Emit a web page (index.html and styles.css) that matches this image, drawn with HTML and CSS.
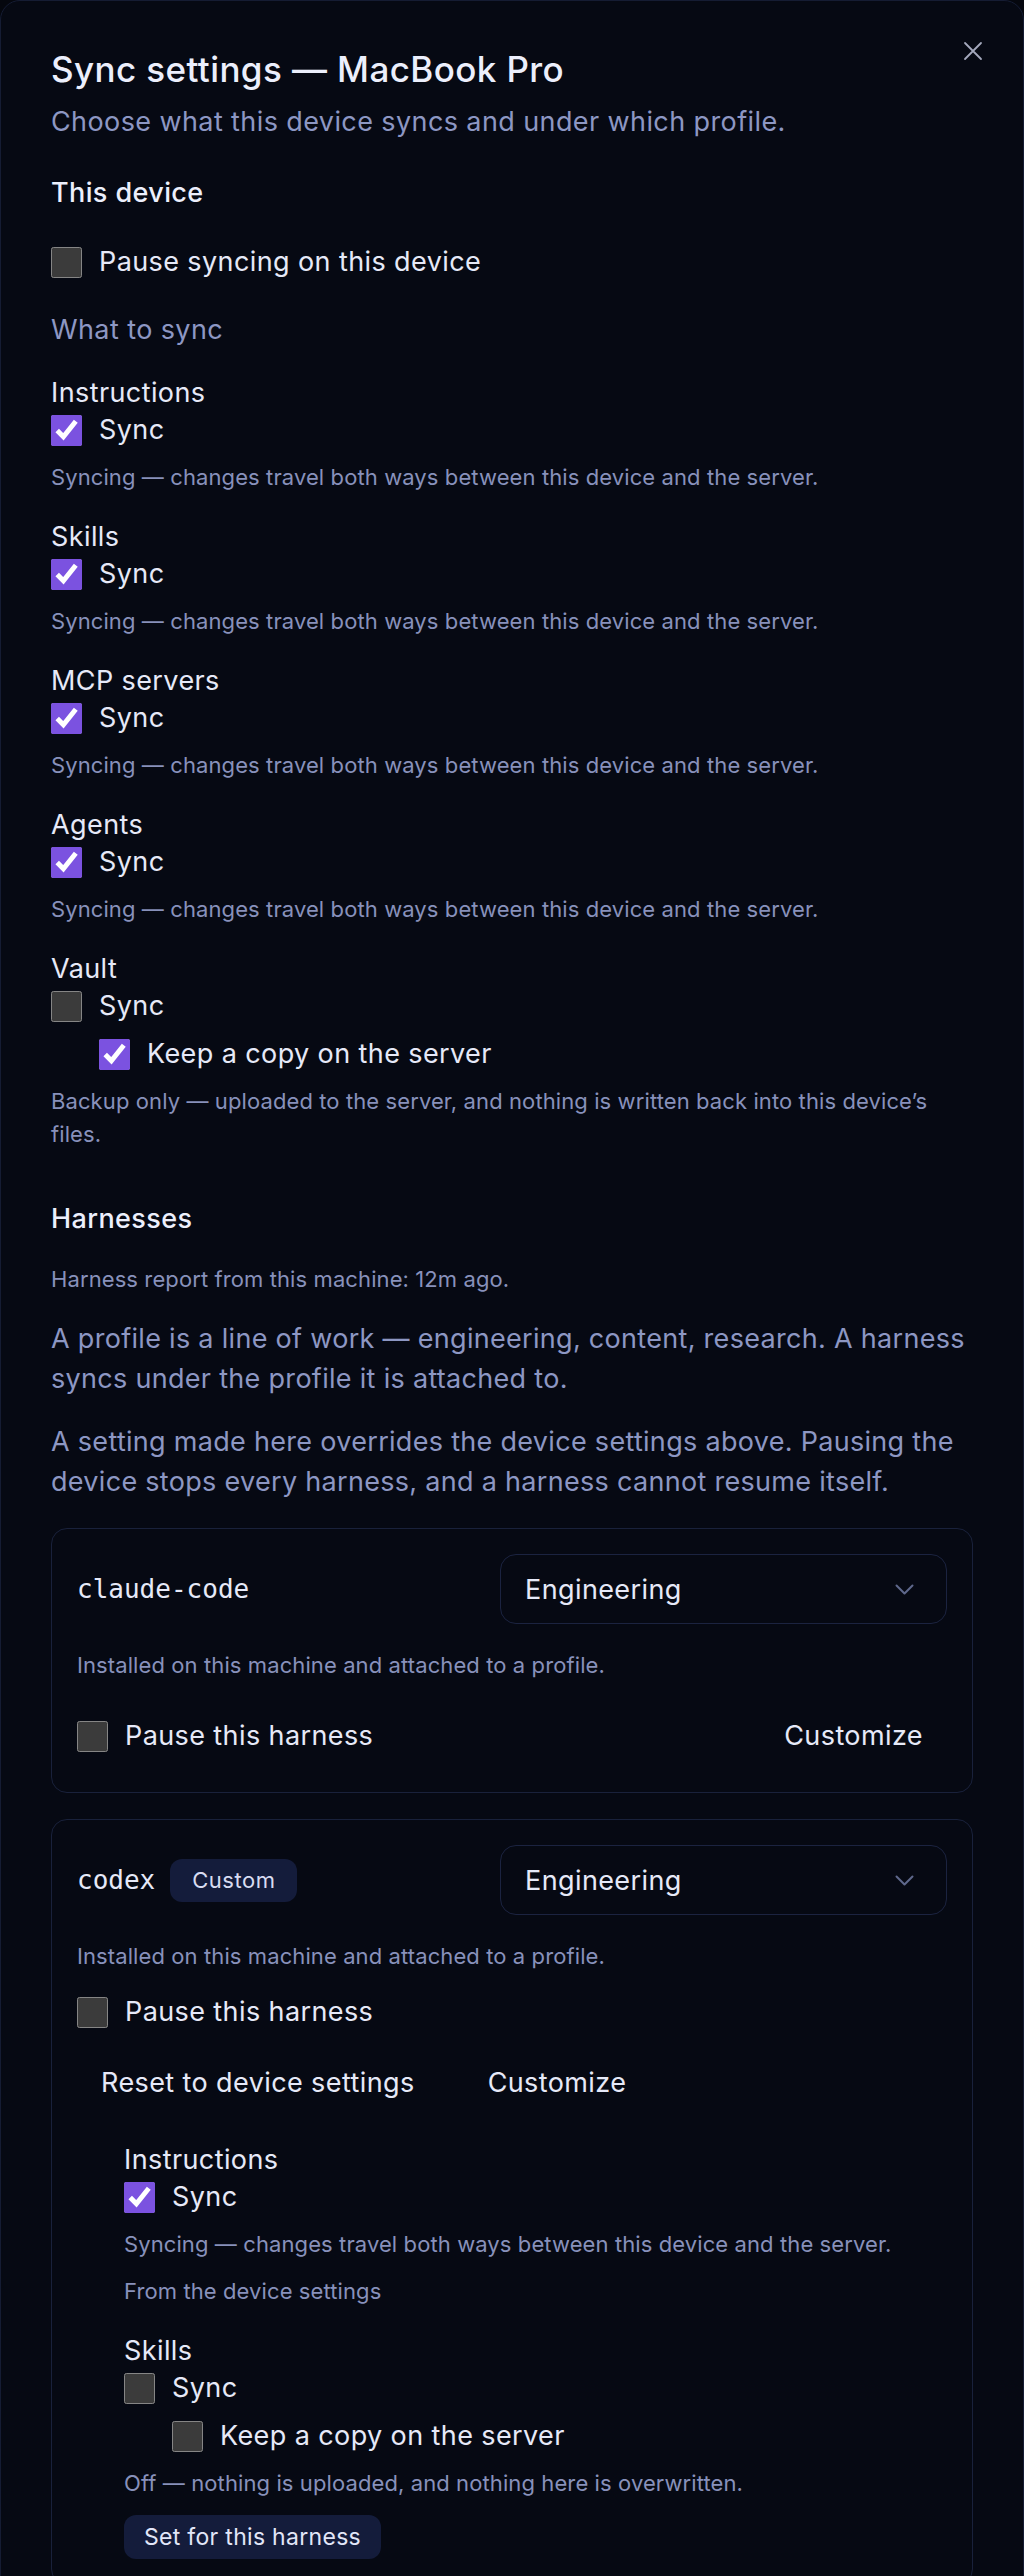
FILE: index.html
```html
<!DOCTYPE html>
<html lang="en">
<head>
    <meta charset="UTF-8">
    <meta name="viewport" content="width=device-width, initial-scale=1.0">
    <title>Sync settings — MacBook Pro</title>
    <link rel="stylesheet" href="styles.css">
</head>
<body>
    <div class="dialog">
        <button class="close" aria-label="Close">
            <svg width="20" height="20" viewBox="0 0 20 20"><path d="M2 2L18 18M18 2L2 18" stroke="currentColor" stroke-width="1.8" fill="none" stroke-linecap="round"/></svg>
        </button>
        <h1 class="title">Sync settings — MacBook Pro</h1>
        <p class="subtitle">Choose what this device syncs and under which profile.</p>

        <h2 class="section-title">This device</h2>
        <label class="check pause-device"><input type="checkbox"><span>Pause syncing on this device</span></label>

        <p class="group-label">What to sync</p>
        <div class="sync-list">
            <div class="sync-item">
                <div class="item-label">Instructions</div>
                <label class="check"><input type="checkbox" checked><span>Sync</span></label>
                <p class="helper">Syncing — changes travel both ways between this device and the server.</p>
            </div>
            <div class="sync-item">
                <div class="item-label">Skills</div>
                <label class="check"><input type="checkbox" checked><span>Sync</span></label>
                <p class="helper">Syncing — changes travel both ways between this device and the server.</p>
            </div>
            <div class="sync-item">
                <div class="item-label">MCP servers</div>
                <label class="check"><input type="checkbox" checked><span>Sync</span></label>
                <p class="helper">Syncing — changes travel both ways between this device and the server.</p>
            </div>
            <div class="sync-item">
                <div class="item-label">Agents</div>
                <label class="check"><input type="checkbox" checked><span>Sync</span></label>
                <p class="helper">Syncing — changes travel both ways between this device and the server.</p>
            </div>
            <div class="sync-item">
                <div class="item-label">Vault</div>
                <label class="check"><input type="checkbox"><span>Sync</span></label>
                <label class="check nested"><input type="checkbox" checked><span>Keep a copy on the server</span></label>
                <p class="helper">Backup only — uploaded to the server, and nothing is written back into this device’s files.</p>
            </div>
        </div>

        <h2 class="section-title harnesses-title">Harnesses</h2>
        <p class="helper report">Harness report from this machine: 12m ago.</p>
        <p class="intro">A profile is a line of work — engineering, content, research. A harness syncs under the profile it is attached to.</p>
        <p class="intro">A setting made here overrides the device settings above. Pausing the device stops every harness, and a harness cannot resume itself.</p>

        <div class="harness-card">
            <div class="harness-head">
                <div class="harness-name"><code>claude-code</code></div>
                <div class="select"><span>Engineering</span>
                    <svg width="19" height="11" viewBox="0 0 19 11"><path d="M1.5 1.5L9.5 9.5L17.5 1.5" stroke="currentColor" stroke-width="2" fill="none" stroke-linecap="round" stroke-linejoin="round"/></svg>
                </div>
            </div>
            <p class="helper installed">Installed on this machine and attached to a profile.</p>
            <div class="harness-foot">
                <label class="check"><input type="checkbox"><span>Pause this harness</span></label>
                <button class="btn-ghost">Customize</button>
            </div>
        </div>

        <div class="harness-card">
            <div class="harness-head">
                <div class="harness-name"><code>codex</code><span class="badge">Custom</span></div>
                <div class="select"><span>Engineering</span>
                    <svg width="19" height="11" viewBox="0 0 19 11"><path d="M1.5 1.5L9.5 9.5L17.5 1.5" stroke="currentColor" stroke-width="2" fill="none" stroke-linecap="round" stroke-linejoin="round"/></svg>
                </div>
            </div>
            <p class="helper installed">Installed on this machine and attached to a profile.</p>
            <label class="check pause-harness"><input type="checkbox"><span>Pause this harness</span></label>
            <div class="actions">
                <button class="btn-ghost">Reset to device settings</button>
                <button class="btn-ghost">Customize</button>
            </div>
            <div class="override">
                <div class="sync-item">
                    <div class="item-label">Instructions</div>
                    <label class="check"><input type="checkbox" checked><span>Sync</span></label>
                    <p class="helper">Syncing — changes travel both ways between this device and the server.</p>
                    <p class="helper source">From the device settings</p>
                </div>
                <div class="sync-item">
                    <div class="item-label">Skills</div>
                    <label class="check"><input type="checkbox"><span>Sync</span></label>
                    <label class="check nested"><input type="checkbox"><span>Keep a copy on the server</span></label>
                    <p class="helper">Off — nothing is uploaded, and nothing here is overwritten.</p>
                    <button class="btn-soft">Set for this harness</button>
                </div>
            </div>
        </div>
    </div>
</body>
</html>
```
FILE: styles.css
```css
:root {
    color-scheme: dark;
}
body {
    margin: 0;
    background-color: #05070e;
    font-family: Inter, "Noto Sans", sans-serif;
    color: #e6e9f8;
}
.dialog {
    position: relative;
    padding: 46px 50px 40px;
    background-color: #060913;
    border: 1px solid #151c33;
    border-radius: 20px;
    letter-spacing: 0.4px;
}
.close {
    position: absolute;
    top: 30px;
    right: 30px;
    width: 40px;
    height: 40px;
    display: flex;
    align-items: center;
    justify-content: center;
    padding: 0;
    background: none;
    border: none;
    color: #a4a9bd;
    cursor: pointer;
}
.title {
    margin: 0;
    font-size: 35px;
    line-height: 45px;
    font-weight: 500;
    color: #eceffc;
}
.subtitle {
    margin: 10px 0 0;
    font-size: 27px;
    line-height: 40px;
    color: #8d97c3;
}
.section-title {
    margin: 31px 0 0;
    font-size: 27px;
    line-height: 40px;
    font-weight: 500;
    color: #eceffc;
}
.check {
    display: flex;
    align-items: center;
    gap: 17px;
    height: 36px;
    font-size: 27px;
    line-height: 36px;
    color: #e6e9f8;
    cursor: pointer;
}
.check input {
    width: 31px;
    height: 31px;
    margin: 0;
    flex: none;
    accent-color: #7b52e0;
}
.pause-device {
    margin-top: 29px;
    height: 40px;
}
.group-label {
    margin: 28px 0 0;
    font-size: 27px;
    line-height: 40px;
    color: #8d97c3;
}
.sync-list {
    margin-top: 25px;
    display: flex;
    flex-direction: column;
    gap: 25px;
}
.sync-item {
    display: flex;
    flex-direction: column;
}
.item-label {
    font-size: 27px;
    line-height: 36px;
    color: #e6e9f8;
}
.sync-item > .check {
    margin-top: 1px;
}
.sync-item > .check.nested {
    margin-top: 12px;
    margin-left: 48px;
}
.helper {
    margin: 13px 0 0;
    font-size: 22px;
    line-height: 33px;
    letter-spacing: 0.1px;
    color: #8891bb;
}
.harnesses-title {
    margin-top: 48px;
}
.helper.report {
    margin-top: 24px;
}
.intro {
    margin: 23px 0 0;
    font-size: 27px;
    line-height: 40px;
    letter-spacing: 0.3px;
    color: #8d97c3;
}
.harness-card {
    margin-top: 26px;
    padding: 25px;
    border: 1px solid #19213b;
    border-radius: 16px;
    display: flex;
    flex-direction: column;
}
.harness-head {
    display: flex;
    align-items: center;
    justify-content: space-between;
}
.harness-name {
    display: flex;
    align-items: center;
    gap: 15px;
}
.harness-name code {
    font-family: "DejaVu Sans Mono", monospace;
    font-size: 26px;
    line-height: 36px;
    letter-spacing: 0;
    color: #e6e9f8;
}
.badge {
    padding: 7px 22px;
    font-size: 22px;
    line-height: 29px;
    letter-spacing: 0.5px;
    background-color: #141c3b;
    color: #d8dcf2;
    border-radius: 12px;
}
.select {
    width: 447px;
    height: 70px;
    box-sizing: border-box;
    padding: 0 32px 0 24px;
    display: flex;
    align-items: center;
    justify-content: space-between;
    border: 1.5px solid #1b2340;
    border-radius: 16px;
    font-size: 27px;
    color: #e6e9f8;
}
.select svg {
    color: #5f688c;
}
.helper.installed {
    margin-top: 25px;
}
.harness-foot {
    margin-top: 23px;
    display: flex;
    align-items: center;
    justify-content: space-between;
}
.btn-ghost {
    padding: 11px 24px;
    font-family: inherit;
    font-size: 27px;
    line-height: 40px;
    letter-spacing: inherit;
    background: none;
    border: none;
    color: #e6e9f8;
    cursor: pointer;
}
.pause-harness {
    margin-top: 19px;
    height: 40px;
}
.actions {
    margin-top: 20px;
    display: flex;
    gap: 25px;
}
.override {
    margin-top: 28px;
    padding-left: 47px;
    display: flex;
    flex-direction: column;
    gap: 25px;
}
.helper.source {
    margin-top: 14px;
}
.btn-soft {
    align-self: flex-start;
    margin-top: 15px;
    padding: 7px 20px;
    font-family: inherit;
    font-size: 23px;
    line-height: 30px;
    letter-spacing: 0.3px;
    background-color: #141c3b;
    color: #e2e6f8;
    border: none;
    border-radius: 12px;
    cursor: pointer;
}
```
